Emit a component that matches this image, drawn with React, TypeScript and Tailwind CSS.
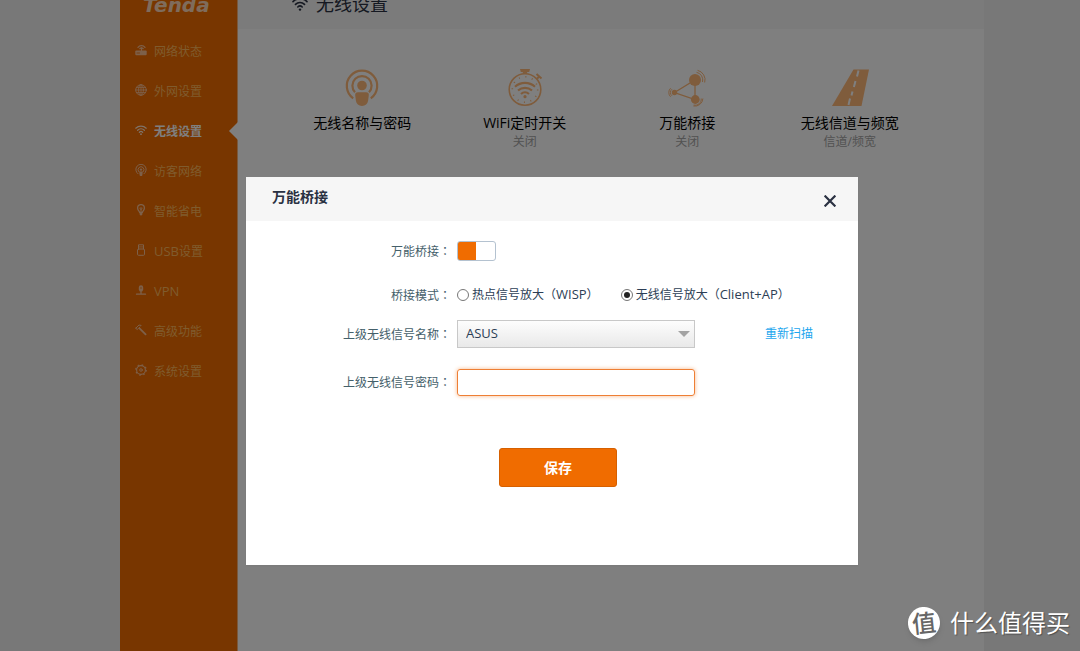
import React from "react";
import type { ReactNode } from "react";

const line = {
  fill: "none",
  stroke: "currentColor",
  strokeWidth: 1.3,
  strokeLinecap: "round" as const,
};

function WifiIcon({ className }: { className: string }) {
  return (
    <svg viewBox="0 0 16 16" className={className} {...line} strokeWidth={1.6}>
      <path d="M1 5.6a10 10 0 0 1 14 0M3.5 8.4a6.4 6.4 0 0 1 9 0M5.8 11a3.2 3.2 0 0 1 4.4 0" />
      <circle cx="8" cy="13.6" r="1.2" fill="currentColor" stroke="none" />
    </svg>
  );
}

const RouterIcon = (
  <svg viewBox="0 0 12 12" className="size-3" {...line}>
    <rect x="0.3" y="6.6" width="11.4" height="4.6" rx="1" fill="currentColor" stroke="none" />
    <path d="M6.500 3.500v3M3 3.400a4.400 4.400 0 0 1 7 0M4.800 4.600a2.200 2.200 0 0 1 3.400 0" strokeWidth="1.200" />
    <path d="M2 9h2.500" stroke="#f06c00" strokeWidth="0.8" />
  </svg>
);
const GlobeIcon = (
  <svg viewBox="0 0 12 12" className="size-3" {...line} strokeWidth={0.9}>
    <circle cx="6" cy="6" r="5.3" />
    <ellipse cx="6" cy="6" rx="2.4" ry="5.300" />
    <path d="M6 .7v10.600M.7 6h10.600M1.500 3.400h9M1.500 8.600h9" />
  </svg>
);
const GuestIcon = (
  <svg viewBox="0 0 12 12" className="size-3" {...line} strokeWidth={1}>
    <path d="M3 9.800a5.200 5.200 0 1 1 6 0M3.800 7.800a3 3 0 1 1 4.400 0" />
    <circle cx="6" cy="5.600" r="1.200" fill="currentColor" stroke="none" />
    <path d="M4.200 7.600h3.600l-.4 3.200a1.400 1.400 0 0 1-2.800 0z" fill="currentColor" stroke="none" />
  </svg>
);
const BulbIcon = (
  <svg viewBox="0 0 12 12" className="size-3" {...line}>
    <path d="M4.600 8.400C4.400 7 2.600 6.400 2.600 4a3.400 3.400 0 0 1 6.800 0c0 2.400-1.800 3-2 4.400z" />
    <path d="M6 3.500v4.500M4.800 4.500 6 5.500l1.200-1" strokeWidth="1" />
    <path d="M4.600 9h2.800v1.400L6 11.800 4.600 10.400z" fill="currentColor" stroke="none" />
  </svg>
);
const UsbIcon = (
  <svg viewBox="0 0 12 12" className="size-3" {...line} strokeWidth={1}>
    <rect x="2.500" y="5" width="7" height="6.300" rx="1" />
    <path d="M3.500 5V.8h5V5M5 2.500v.8M7 2.500v.8" />
  </svg>
);
const VpnIcon = (
  <svg viewBox="0 0 12 12" className="size-3" {...line}>
    <path d="M6 1.200a2.200 2.200 0 0 1 2.200 2.200v2.400L7.200 7.500H4.800l-1-1.700V3.400A2.200 2.200 0 0 1 6 1.200z" fill="currentColor" stroke="none" />
    <path d="M6 7v3M1.500 10.200h9" />
    <circle cx="6" cy="4" r="0.700" fill="#f06c00" stroke="none" />
  </svg>
);
const HammerIcon = (
  <svg viewBox="0 0 12 12" className="size-3" {...line}>
    <path d="M.8 4.200 4 1l2 .4M.8 4.200l1.400 1.300 2.800-2.500" strokeWidth="1" />
    <path d="m4.800 4.600 5.800 5.800" strokeWidth="1.800" />
  </svg>
);
const GearIcon = (
  <svg viewBox="0 0 12 12" className="size-3" {...line} strokeWidth={1.1}>
    <circle cx="6" cy="6" r="4.400" />
    <circle cx="6" cy="6" r="1.300" strokeWidth="0.900" />
    <circle cx="6" cy="6" r="5.300" strokeDasharray="1.600 2.563" strokeLinecap="butt" />
  </svg>
);

const navItems: { label: ReactNode; id: string; icon: ReactNode; active?: boolean }[] = [
  { id: "status", label: "网络状态", icon: RouterIcon },
  { id: "wan", label: "外网设置", icon: GlobeIcon },
  { id: "wireless", label: "无线设置", icon: <WifiIcon className="size-3" />, active: true },
  { id: "guest", label: "访客网络", icon: GuestIcon },
  { id: "power", label: "智能省电", icon: BulbIcon },
  { id: "usb", label: <><Latin>USB</Latin>设置</>, icon: UsbIcon },
  { id: "vpn", label: <Latin>VPN</Latin>, icon: VpnIcon },
  { id: "advanced", label: "高级功能", icon: HammerIcon },
  { id: "system", label: "系统设置", icon: GearIcon },
];

function Latin({ children }: { children: ReactNode }) {
  return <span className="text-[13px]">{children}</span>;
}

const HotspotArt = (
  <svg viewBox="0 0 40 40" className="size-10" fill="none" stroke="currentColor">
    <path d="M11.200 31.300a15.200 15.200 0 1 1 17.600 0" strokeWidth="2.200" />
    <path d="M13 25.200a9.600 9.600 0 1 1 14 0" strokeWidth="2.200" />
    <circle cx="20" cy="18.500" r="4.800" fill="currentColor" stroke="none" />
    <path d="M16 25.200h8a2.800 2.800 0 0 1 2.800 3.100l-.7 5.500a6.200 6.200 0 0 1-12.200 0l-.7-5.500a2.800 2.800 0 0 1 2.800-3.100z" fill="currentColor" stroke="none" />
  </svg>
);

const TimerArt = (
  <svg viewBox="0 0 40 40" className="size-10" fill="none" stroke="currentColor">
    <circle cx="20" cy="22.500" r="15.800" strokeWidth="1.600" />
    <circle cx="20" cy="22.500" r="12.700" strokeWidth="1.600" strokeDasharray="1 5.650" />
    <path d="M15 2h10l-.8 3h-2v2h-4.400V5h-2z" fill="currentColor" stroke="none" />
    <path d="m31.500 7 5 4.500M34.500 9l-2.500 2.800" strokeWidth="2" />
    <path d="M10 19.700a15 15 0 0 1 20 0M13 23.500a10.400 10.400 0 0 1 14 0M16 27a6 6 0 0 1 8 0" strokeWidth="2.200" />
    <circle cx="20" cy="29.700" r="1.600" fill="currentColor" stroke="none" />
  </svg>
);

const BridgeArt = (
  <svg viewBox="0 0 40 40" className="size-10" fill="none" stroke="currentColor">
    <path d="M7.500 25.500 28 13v19.500z" strokeWidth="1.300" />
    <circle cx="28" cy="13" r="6" fill="currentColor" stroke="none" />
    <circle cx="28.300" cy="32.500" r="4.400" fill="currentColor" stroke="none" />
    <circle cx="7.500" cy="25.500" r="2.700" fill="currentColor" stroke="none" />
    <path d="M29.500 5.300a7.800 7.800 0 0 1 6 9.700M30.500 3.300a9.800 9.800 0 0 1 7.200 12.200M34.200 31.500a6 6 0 0 1-7.500 6.500M35.900 31.500a8 8 0 0 1-9.500 7.500M5 28.800a4.200 4.200 0 0 1 0-6.600M3.600 29.800a6 6 0 0 1 0-8.600" strokeWidth="1" />
  </svg>
);

const RoadArt = (
  <svg viewBox="0 0 40 40" className="size-10">
    <path d="M23.500 2.500H39L31.500 39H2z" fill="currentColor" />
    <path d="m28.500 3.500-1.500 6M25.500 14l-1.600 6M22.500 24.500l-1 4M20 31.500l-1.500 6.500" stroke="#fff" strokeWidth="2" />
  </svg>
);

const features = [
  { label: "无线名称与密码", note: "", art: HotspotArt },
  { label: "WiFi定时开关", note: "关闭", art: TimerArt },
  { label: "万能桥接", note: "关闭", art: BridgeArt },
  { label: "无线信道与频宽", note: "信道/频宽", art: RoadArt },
];

function Sidebar() {
  return (
    <nav className="w-[118px] shrink-0 border-r border-[#f5b27a] bg-[#f06c00]">
      <div className="flex h-8 items-start overflow-hidden pl-[23px]">
        <span className="-mt-[7px] font-['DejaVu_Sans',sans-serif] text-xl leading-6 font-bold text-[#ffd9b8] italic">
          Tenda
        </span>
      </div>
      <ul>
        {navItems.map((item) => (
          <li key={item.id} className="relative">
            <a
              href="#"
              className={
                item.active
                  ? "flex h-10 items-center gap-[7px] pl-[15px] text-xs font-bold text-white"
                  : "flex h-10 items-center gap-[7px] pl-[15px] text-xs text-[#ffb75c]"
              }
            >
              <span className={item.active ? "pb-1 text-[#ffe6d0]" : "pb-1 text-[#fbc093]"}>{item.icon}</span>
              <span>{item.label}</span>
            </a>
            {item.active && (
              <svg viewBox="0 0 9 18" className="absolute top-2.5 -right-px h-[18px] w-[9px] fill-white">
                <path d="M9 0v18L0 9z" />
              </svg>
            )}
          </li>
        ))}
      </ul>
    </nav>
  );
}

function Colon() {
  return <span lang="zh-Hant" className="font-['Noto_Sans_CJK_TC',sans-serif]">：</span>;
}

function Row({ label, htmlFor, children, className }: { label: string; htmlFor?: string; children: ReactNode; className: string }) {
  return (
    <div className={className}>
      <label htmlFor={htmlFor} className="w-[205px] shrink-0 text-right text-[#44606a]">
        {label}
        <Colon />
      </label>
      {children}
    </div>
  );
}

const radioClass =
  "grid size-3 shrink-0 appearance-none place-content-center rounded-full border border-[#777] bg-white before:size-1.5 before:rounded-full checked:before:bg-[#222]";

function BridgeDialog() {
  return (
    <section role="dialog" aria-labelledby="dialog-title" className="w-full max-w-[612px] bg-white text-xs text-[#2c3e55] shadow-xs">
      <header className="flex h-11 items-center justify-between bg-[#f6f6f6] pr-[19px] pl-[26px]">
        <h2 id="dialog-title" className="pb-1 text-sm font-bold text-[#2a3142]">万能桥接</h2>
        <button type="button" aria-label="关闭" className="mt-1 p-0.5">
          <svg viewBox="0 0 12 12" className="m-px size-3" stroke="#2a3142" strokeWidth="2.200">
            <path d="m.6.600 10.800 10.800M11.400.600.6 11.400" />
          </svg>
        </button>
      </header>
      <form className="pt-5 pb-[78px]" onSubmit={(e) => e.preventDefault()}>
        <Row label="万能桥接" htmlFor="bridge" className="flex h-5 items-center gap-1.5">
          <input
            id="bridge"
            type="checkbox"
            role="switch"
            defaultChecked
            className="h-5 w-[39px] appearance-none rounded-[3px] border border-[#b4c2d0] bg-[linear-gradient(to_right,#f06c00_50%,#fff_50%)]"
          />
        </Row>
        <Row label="桥接模式" className="mt-[22px] flex h-6 items-center gap-1.5">
          <div className="flex items-center gap-[22px]">
            <label className="flex items-center gap-[3px]">
              <input type="radio" name="mode" className={radioClass} />
              <span>热点信号放大（<Latin>WISP</Latin>）</span>
            </label>
            <label className="flex items-center gap-[3px]">
              <input type="radio" name="mode" defaultChecked className={radioClass} />
              <span>无线信号放大（<Latin>Client+AP</Latin>）</span>
            </label>
          </div>
        </Row>
        <Row label="上级无线信号名称" htmlFor="ssid" className="mt-[13px] flex items-center gap-1.5">
          <div className="relative w-[238px]">
            <select
              id="ssid"
              className="h-7 w-full appearance-none border border-[#c8c8c8] bg-linear-to-b from-[#fdfdfd] to-[#e9e9e9] px-2 text-[13px]"
            >
              <option>ASUS</option>
            </select>
            <svg viewBox="0 0 12 6" className="pointer-events-none absolute top-[11px] right-[5px] h-1.5 w-3 fill-[#a3a3a3]">
              <path d="M0 0h12L6 6z" />
            </svg>
          </div>
          <a href="#" className="ml-16 text-[#1ba6ee]">重新扫描</a>
        </Row>
        <Row label="上级无线信号密码" htmlFor="password" className="mt-[21px] flex items-center gap-1.5">
          <input
            id="password"
            type="password"
            className="h-[27px] w-[238px] rounded-[3px] border border-[#ee7f35] px-2 shadow-[0_0_4px_#f8b98a] outline-none"
          />
        </Row>
        <div className="mt-[52px] flex pl-[253px]">
          <button
            type="submit"
            className="h-[39px] w-[118px] rounded-[3px] border border-[#d66000] bg-[#f06c00] text-sm font-bold text-white"
          >
            保存
          </button>
        </div>
      </form>
    </section>
  );
}

export default function App() {
  return (
    <div
      lang="zh-CN"
      className="relative min-h-screen overflow-hidden bg-[#f0f0f0] pl-6 font-['Open_Sans','Noto_Sans_CJK_SC',sans-serif]"
    >
      <div className="mx-auto flex min-h-screen w-full max-w-[864px] bg-white">
        <Sidebar />
        <main className="flex-1">
          <header className="flex h-[29px] items-start gap-2 bg-[#f6f6f6] pl-[54px] text-[#2a3142]">
            <WifiIcon className="-mt-1 size-4" />
            <h1 className="-mt-2 text-lg leading-6">无线设置</h1>
          </header>
          <ul className="grid grid-cols-4 pt-[38px] pr-[53px] pl-[43px]">
            {features.map((f) => (
              <li key={f.label}>
                <a href="#" className="flex flex-col items-center text-black">
                  <span className="text-[#ffb878]">{f.art}</span>
                  <span className="mt-1.5 text-sm leading-5">{f.label}</span>
                  <span className="text-xs leading-[18px] text-[#a4a4a4]">{f.note}</span>
                </a>
              </li>
            ))}
          </ul>
        </main>
      </div>

      <div className="absolute inset-0 flex items-start justify-center bg-black/50 pt-[177px] pl-6">
        <BridgeDialog />
      </div>

      <div className="absolute right-2.5 bottom-3 flex items-center gap-2.5 text-2xl leading-8 text-white [text-shadow:1px_1px_1px_rgba(0,0,0,0.35)]">
        <span className="flex size-8 -rotate-6 items-center justify-center rounded-full bg-white font-medium text-[#666] shadow-md [text-shadow:none]">
          值
        </span>
        什么值得买
      </div>
    </div>
  );
}
